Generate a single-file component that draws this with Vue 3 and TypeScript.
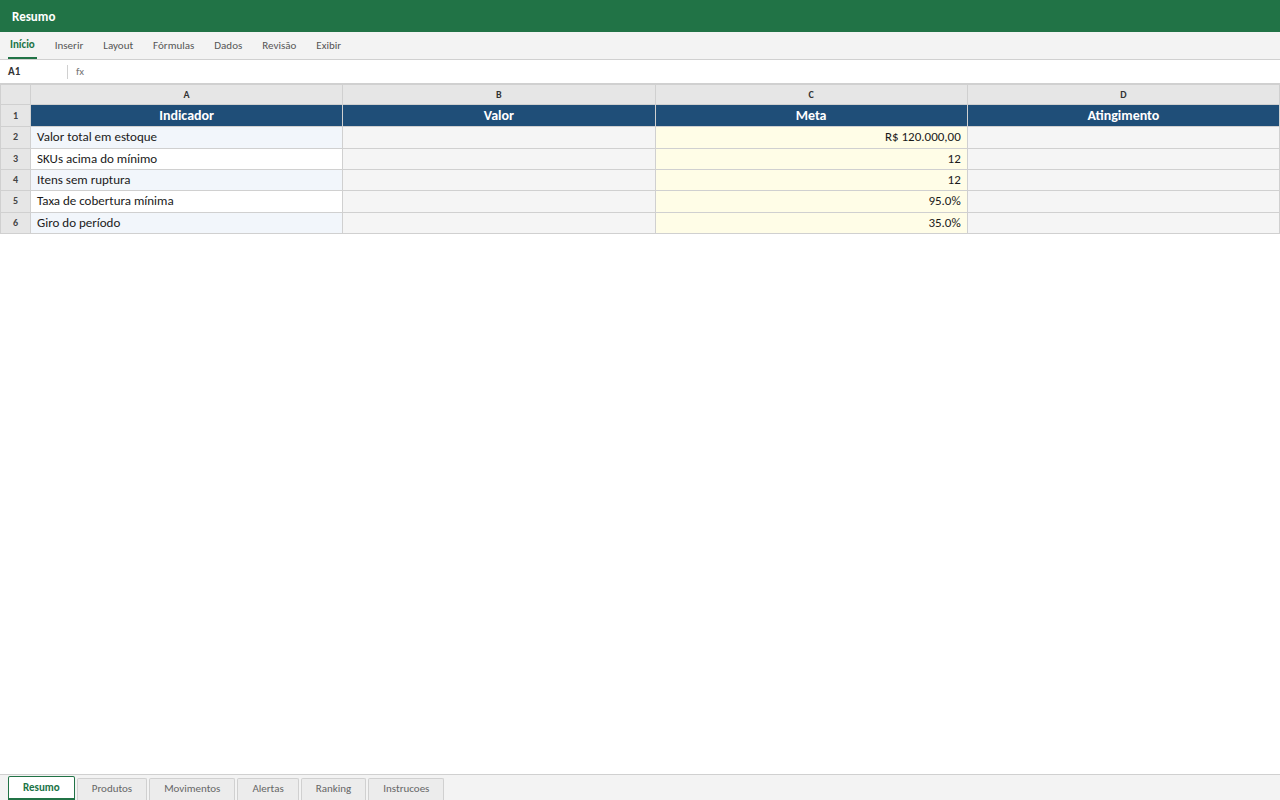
<script setup lang="ts">
const menu: string[] = ['Início', 'Inserir', 'Layout', 'Fórmulas', 'Dados', 'Revisão', 'Exibir']
const cols: string[] = ['A', 'B', 'C', 'D']
const heads: string[] = ['Indicador', 'Valor', 'Meta', 'Atingimento']
const rows: { label: string; meta: string }[] = [
  { label: 'Valor total em estoque', meta: 'R$ 120.000,00' },
  { label: 'SKUs acima do mínimo', meta: '12' },
  { label: 'Itens sem ruptura', meta: '12' },
  { label: 'Taxa de cobertura mínima', meta: '95.0%' },
  { label: 'Giro do período', meta: '35.0%' },
]
const tabs: string[] = ['Resumo', 'Produtos', 'Movimentos', 'Alertas', 'Ranking', 'Instrucoes']
</script>

<template>
  <div class="app">
    <header class="title">Resumo</header>
    <nav class="ribbon">
      <span v-for="(m, i) in menu" :key="m" class="menu" :class="{ active: i === 0 }">{{ m }}</span>
    </nav>
    <div class="formula">
      <span class="ref">A1</span>
      <span class="fx">fx</span>
    </div>
    <main class="sheet">
      <table>
        <colgroup>
          <col class="c0" />
          <col v-for="c in cols" :key="c" />
        </colgroup>
        <thead>
          <tr class="letters">
            <th class="idx"></th>
            <th v-for="c in cols" :key="c">{{ c }}</th>
          </tr>
        </thead>
        <tbody>
          <tr class="head">
            <th class="idx">1</th>
            <td v-for="h in heads" :key="h">{{ h }}</td>
          </tr>
          <tr v-for="(r, i) in rows" :key="r.label" class="row">
            <th class="idx">{{ i + 2 }}</th>
            <td class="label" :class="{ alt: i % 2 === 0 }">{{ r.label }}</td>
            <td class="grey"></td>
            <td class="meta">{{ r.meta }}</td>
            <td class="grey"></td>
          </tr>
        </tbody>
      </table>
    </main>
    <footer class="tabs">
      <span v-for="(t, i) in tabs" :key="t" class="tab" :class="{ on: i === 0 }">{{ t }}</span>
    </footer>
  </div>
</template>

<style>
html, body { margin: 0; padding: 0; background: #fff; }
</style>

<style scoped>
.app {
  width: 1280px;
  height: 800px;
  display: flex;
  flex-direction: column;
  font-family: Carlito, Calibri, Lato, "Liberation Sans", sans-serif;
  overflow: hidden;
  color: #1a1a1a;
}
.title {
  height: 32px;
  flex: none;
  background: #217346;
  color: #fff;
  font-size: 13px;
  font-weight: 700;
  line-height: 33px;
  padding-left: 12px;
}
.ribbon {
  height: 28px;
  flex: none;
  box-sizing: border-box;
  background: #f3f3f3;
  border-bottom: 1px solid #d0d0d0;
  display: flex;
  align-items: stretch;
  gap: 4px;
  padding: 0 4px 0 8px;
}
.menu {
  font-size: 11px;
  color: #555;
  padding: 0 8px;
  line-height: 27px;
}
.menu.active {
  color: #217346;
  font-weight: 700;
  padding: 0 2px;
  margin-right: 6px;
  height: 25px;
  line-height: 25px;
  border-bottom: 2px solid #217346;
}
.formula {
  height: 24px;
  flex: none;
  box-sizing: border-box;
  background: #fff;
  border-bottom: 1px solid #d0d0d0;
  display: flex;
  align-items: center;
  padding-left: 8px;
}
.ref {
  width: 59px;
  font-size: 11px;
  font-weight: 700;
  color: #333;
  line-height: 14px;
  border-right: 1px solid #d0d0d0;
  margin-right: 8px;
}
.fx {
  font-size: 11px;
  color: #777;
}
.sheet {
  flex: 1;
  min-height: 0;
}
table {
  width: 1280px;
  table-layout: fixed;
  border-collapse: collapse;
}
.c0 { width: 30px; }
th, td {
  border: 1px solid #d0d0d0;
  padding: 0;
  box-sizing: border-box;
}
.letters th {
  height: 20px;
  background: #e6e6e6;
  font-size: 10px;
  font-weight: 700;
  color: #333;
  text-align: center;
}
th.idx {
  background: #e6e6e6;
  font-size: 10px;
  font-weight: 700;
  color: #444;
  text-align: center;
}
.head td {
  height: 22.2px;
  background: #1f4e78;
  color: #fff;
  font-size: 14px;
  font-weight: 700;
  text-align: center;
}
.row { height: 21.4px; }
.row th {
  padding-bottom: 1.4px;
}
.row td {
  font-size: 13px;
  color: #1a1a1a;
  padding: 0 6px 1.4px;
}
.label { background: #fff; }
.label.alt { background: #f2f6fb; }
.grey { background: #f5f5f5; }
.meta {
  background: #fffde7;
  text-align: right;
}
.tabs {
  height: 26px;
  flex: none;
  box-sizing: border-box;
  background: #f3f3f3;
  border-top: 1px solid #d0d0d0;
  display: flex;
  align-items: flex-end;
  gap: 2px;
  padding-left: 8px;
}
.tab {
  height: 22px;
  box-sizing: border-box;
  border: 1px solid #d0d0d0;
  border-bottom: none;
  border-radius: 2px 2px 0 0;
  background: #ececec;
  color: #666;
  font-size: 11px;
  line-height: 20px;
  padding: 0 14px;
}
.tab.on {
  height: 24px;
  background: #fff;
  border: 1px solid #217346;
  border-bottom-width: 2px;
  color: #217346;
  font-weight: 700;
  line-height: 21px;
}
</style>
